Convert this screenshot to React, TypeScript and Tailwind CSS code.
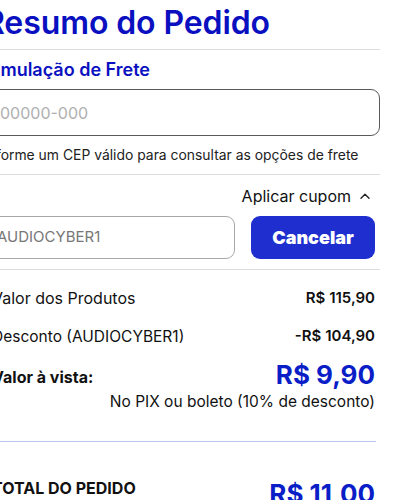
import React from "react";

export default function App() {
  return (
    <div className="w-[402px] h-[500px] overflow-hidden bg-white" style={{ fontFamily: "Inter, 'Noto Sans', sans-serif" }}>
      <div className="ml-[-16px] w-[396px]">
        <h1 className="h-[49px] pt-[2px] text-[32px] leading-[42px] font-semibold text-[#0a10bf] tracking-[-0.1px]">Resumo do Pedido</h1>
        <div className="h-px bg-[#dedede]" />
        <div className="pt-[8px] h-[39px] text-[18px] leading-[24px] font-semibold text-[#0a10bf]">Simulação de Frete</div>
        <div className="h-[47px] rounded-[9px] border-[1.5px] border-[#5a5a5a] flex items-center px-[15px]">
          <span className="text-[16px] text-[#b0b0b0]">00000-000</span>
        </div>
        <div className="h-[38px] flex items-center text-[13.9px] text-[#222]">Informe um CEP válido para consultar as opções de frete</div>
        <div className="h-px bg-[#dedede]" />
        <div className="h-[41px] flex items-center justify-end pr-[10px] gap-[9px] text-[16px] text-[#111]">
          <span>Aplicar cupom</span>
          <svg width="10" height="6" viewBox="0 0 10 6" fill="none"><path d="M1 5.2 5 1.2 9 5.2" stroke="#222" strokeWidth="1.4" strokeLinecap="round" strokeLinejoin="round" /></svg>
        </div>
        <div className="flex gap-[16px] pr-[5px] h-[43px]">
          <div className="flex-1 rounded-[9px] border border-[#a8a8a8] flex items-center px-[12px] text-[15px] text-[#777]">AUDIOCYBER1</div>
          <button className="w-[124px] rounded-[9px] bg-[#1e2ecf] text-white text-[18px] font-black">Cancelar</button>
        </div>
        <div className="mt-[10px] h-px bg-[#dedede]" />
        <div className="pl-[8px] pr-[5px]">
          <div className="h-[45px] pt-[11px] flex justify-between items-center text-[16px] text-[#111]">
            <span>Valor dos Produtos</span>
            <span className="font-semibold text-[15px]">R$ 115,90</span>
          </div>
          <div className="h-[35px] pt-[8px] flex justify-between items-center text-[15.5px] text-[#111]">
            <span>Desconto (AUDIOCYBER1)</span>
            <span className="font-semibold text-[15px]">-R$ 104,90</span>
          </div>
          <div className="mt-[17px] flex justify-between items-start">
            <span className="text-[16px] font-bold text-[#111] leading-[24px] mt-[-2px]">Valor à vista:</span>
            <div className="flex flex-col items-end">
              <span className="text-[26px] font-bold text-[#0a1ec8] leading-[30px] mt-[-7px]">R$ 9,90</span>
              <span className="text-[15.5px] text-[#111] leading-[24px]">No PIX ou boleto (10% de desconto)</span>
            </div>
          </div>
        </div>
        <div className="mt-[27px] mr-[4px] h-px bg-[#b8c8ef]" />
        <div className="pl-[8px] pr-[5px] mt-[34px] flex justify-between items-start">
          <span className="text-[16px] font-bold text-[#111] leading-[24px]">TOTAL DO PEDIDO</span>
          <span className="text-[26px] font-bold text-[#0a1ec8] leading-[30px] mt-[3px]">R$ 11,00</span>
        </div>
      </div>
    </div>
  );
}
